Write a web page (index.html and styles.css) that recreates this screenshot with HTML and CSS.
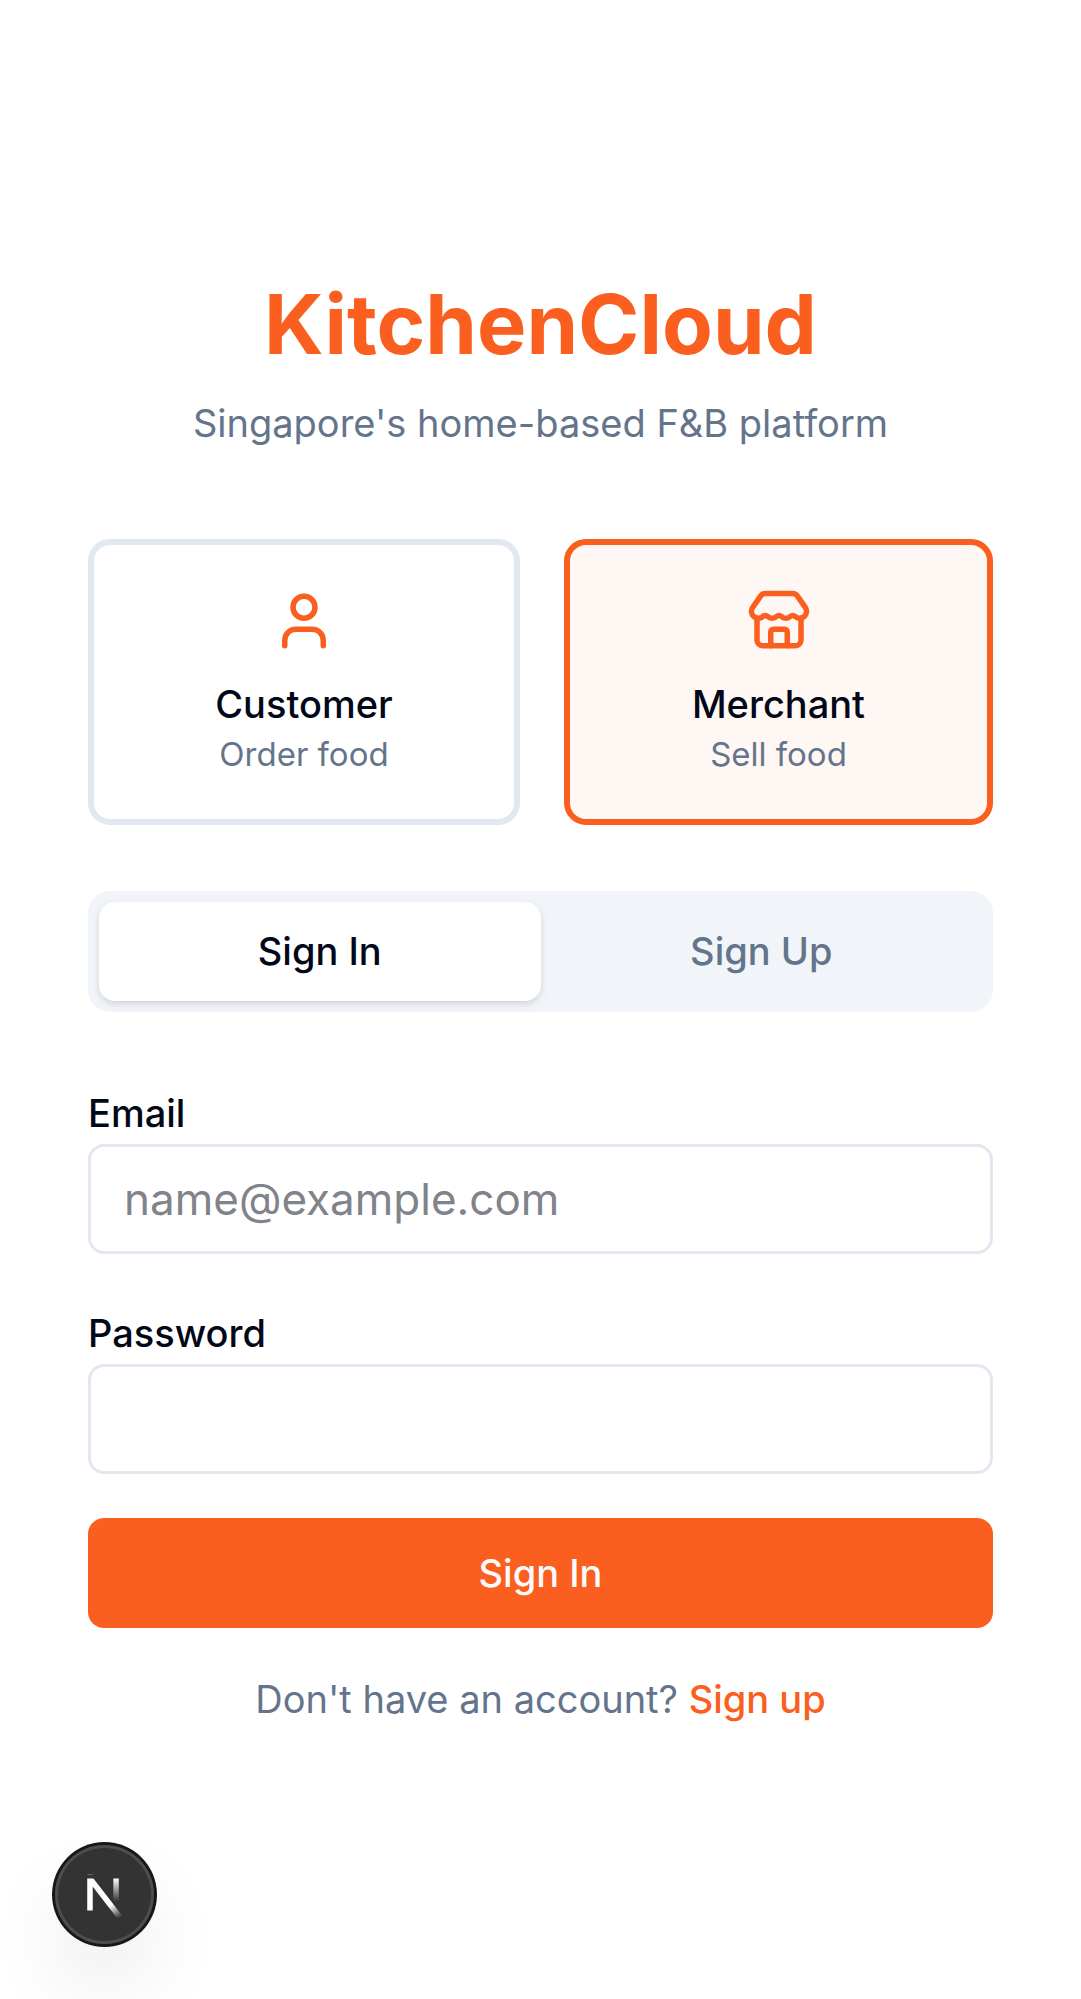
FILE: index.html
```html
<!DOCTYPE html>
<html lang="en">
<head>
<meta charset="utf-8">
<meta name="viewport" content="width=device-width, initial-scale=1">
<title>KitchenCloud</title>
<link rel="stylesheet" href="styles.css">
</head>
<body>
<main class="page">
  <header class="brand">
    <h1 class="brand-name">KitchenCloud</h1>
    <p class="brand-tagline">Singapore's home-based F&amp;B platform</p>
  </header>

  <div class="roles">
    <button class="role" type="button">
      <svg class="role-icon" viewBox="0 0 24 24" aria-hidden="true"><path d="M19 21v-2a4 4 0 0 0-4-4H9a4 4 0 0 0-4 4v2"/><circle cx="12" cy="7" r="4"/></svg>
      <span class="role-name">Customer</span>
      <span class="role-note">Order food</span>
    </button>
    <button class="role role-selected" type="button">
      <svg class="role-icon" viewBox="0 0 24 24" aria-hidden="true"><path d="M15 21v-5a1 1 0 0 0-1-1h-4a1 1 0 0 0-1 1v5"/><path d="M17.774 10.31a1.12 1.12 0 0 0-1.549 0 2.5 2.5 0 0 1-3.451 0 1.12 1.12 0 0 0-1.548 0 2.5 2.5 0 0 1-3.452 0 1.12 1.12 0 0 0-1.549 0 2.5 2.5 0 0 1-3.77-3.248l2.889-4.184A2 2 0 0 1 7 2h10a2 2 0 0 1 1.653.873l2.895 4.192a2.5 2.5 0 0 1-3.774 3.244"/><path d="M4 10.95V19a2 2 0 0 0 2 2h12a2 2 0 0 0 2-2v-8.05"/></svg>
      <span class="role-name">Merchant</span>
      <span class="role-note">Sell food</span>
    </button>
  </div>

  <div class="tabs">
    <button class="tab tab-active" type="button">Sign In</button>
    <button class="tab" type="button">Sign Up</button>
  </div>

  <form class="form">
    <div class="field">
      <label class="field-label" for="email">Email</label>
      <input class="field-input" id="email" type="email" placeholder="name@example.com">
    </div>
    <div class="field">
      <label class="field-label" for="password">Password</label>
      <input class="field-input" id="password" type="password">
    </div>
    <button class="submit" type="submit">Sign In</button>
  </form>

  <p class="switch">Don't have an account? <a class="switch-link" href="#">Sign up</a></p>
</main>

<button class="dev-badge" type="button" aria-label="Open developer tools">
  <svg class="dev-logo" viewBox="0 0 40 40" aria-hidden="true">
    <defs>
      <linearGradient id="diagonal" x1="10" y1="10.6" x2="13.3" y2="15.2" gradientUnits="userSpaceOnUse"><stop stop-color="#fff"/><stop offset="1" stop-color="#fff" stop-opacity="0"/></linearGradient>
      <linearGradient id="stem" x1="11.8" y1="1" x2="11.8" y2="9.4" gradientUnits="userSpaceOnUse"><stop stop-color="#fff"/><stop offset="1" stop-color="#fff" stop-opacity="0"/></linearGradient>
      <clipPath id="logo-top"><rect x="0" y="1" width="16" height="16"/></clipPath>
    </defs>
    <g transform="translate(12.2 13)" fill="none" stroke-width="2">
      <path d="M13.3 15.2L2.34 1V12.6" stroke="url(#diagonal)" clip-path="url(#logo-top)"/>
      <path d="M11.825 1V13.1" stroke="url(#stem)"/>
      <path d="M1.4 -.4H3.4" stroke="#fff" stroke-opacity=".25" stroke-width=".4"/>
    </g>
  </svg>
</button>
</body>
</html>
```

FILE: styles.css
```css
:root {
  --orange: #fa5f20;
  --ink: #020817;
  --muted: #64748b;
  --line: #e2e8f0;
}

* {
  box-sizing: border-box;
  margin: 0;
}

body {
  background: #fff;
  color: var(--ink);
  font-family: Inter, sans-serif;
  font-size: 44px;
  line-height: 66px;
}

button,
input {
  font-family: inherit;
  color: inherit;
}

.page {
  display: flex;
  flex-direction: column;
  padding: 275px 88px 88px;
}

.brand {
  display: flex;
  flex-direction: column;
  gap: 22px;
  text-align: center;
}

.brand-name {
  color: var(--orange);
  font-size: 83px;
  line-height: 99px;
  font-weight: 700;
}

.brand-tagline {
  color: var(--muted);
  font-size: 38px;
  line-height: 55px;
}

.roles {
  display: grid;
  grid-template-columns: 144fr 143fr;
  gap: 44px;
  margin-top: 88px;
}

.role {
  display: flex;
  flex-direction: column;
  align-items: center;
  padding: 43px;
  border: 6px solid var(--line);
  border-radius: 22px;
  background: #fff;
}

.role-selected {
  border-color: var(--orange);
  background: #fff7f4;
}

.role-icon {
  width: 66px;
  height: 66px;
  margin-bottom: 23px;
  fill: none;
  stroke: var(--orange);
  stroke-width: 2;
  stroke-linecap: round;
  stroke-linejoin: round;
}

.role-name {
  font-size: 38px;
  line-height: 55px;
  font-weight: 500;
}

.role-note {
  color: var(--muted);
  font-size: 33px;
  line-height: 44px;
}

.tabs {
  display: grid;
  grid-template-columns: 1fr 1fr;
  margin-top: 66px;
  padding: 11px;
  border-radius: 22px;
  background: #f1f5f9;
}

.tab {
  padding: 22px;
  border: 0;
  border-radius: 16px;
  background: transparent;
  color: var(--muted);
  font-size: 38px;
  line-height: 55px;
  font-weight: 500;
}

.tab-active {
  background: #fff;
  color: var(--ink);
  box-shadow: 0 3px 8px rgba(0, 0, 0, 0.1), 0 3px 6px -3px rgba(0, 0, 0, 0.1);
}

.form {
  display: flex;
  flex-direction: column;
  gap: 44px;
  margin-top: 66px;
}

.field-label {
  font-size: 38px;
  line-height: 38px;
  font-weight: 500;
}

.field-input {
  display: block;
  width: 100%;
  height: 110px;
  padding: 0 33px;
  border: 3px solid var(--line);
  border-radius: 16px;
  background: #fff;
  font-size: 44px;
}

.field-input::placeholder {
  color: #808389;
}

.submit {
  height: 110px;
  border: 0;
  border-radius: 16px;
  background: var(--orange);
  color: #f8fafc;
  font-size: 38px;
  line-height: 55px;
  font-weight: 500;
}

.switch {
  margin-top: 44px;
  color: var(--muted);
  font-size: 38px;
  line-height: 55px;
  text-align: center;
}

.switch-link {
  color: var(--orange);
  font-weight: 500;
  text-decoration: none;
}

.dev-badge {
  position: fixed;
  left: 55px;
  bottom: 55px;
  width: 99px;
  height: 99px;
  padding: 0;
  border: 0;
  border-radius: 50%;
  background: #333;
  box-shadow: 0 0 0 3px #171717, inset 0 0 0 3px #4d4d4d, 0 44px 88px -22px rgba(0, 0, 0, 0.24);
}

.dev-logo {
  display: block;
  width: 110px;
  height: 110px;
  margin: -5px;
}
```
